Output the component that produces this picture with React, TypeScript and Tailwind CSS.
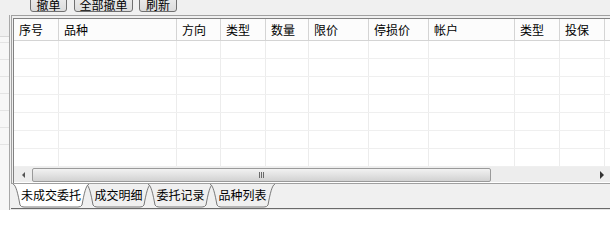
const columns = [
  { title: '序号', w: 45 },
  { title: '品种', w: 118 },
  { title: '方向', w: 44 },
  { title: '类型', w: 45 },
  { title: '数量', w: 43 },
  { title: '限价', w: 60 },
  { title: '停损价', w: 60 },
  { title: '帐户', w: 86 },
  { title: '类型', w: 45 },
  { title: '投保', w: 45 },
  { title: '', w: 60 },
]

const tabs = [
  { label: '未成交委托', w: 76, active: true },
  { label: '成交明细', w: 65, active: false },
  { label: '委托记录', w: 65, active: false },
  { label: '品种列表', w: 65, active: false },
]

const rows = [0, 1, 2, 3, 4, 5, 6]

function ToolButton({ label, w, ml }: { label: string; w: number; ml: number }) {
  return (
    <button
      className="-mt-[10px] h-[22px] shrink-0 rounded-[3px] border border-[#707070] bg-gradient-to-b from-[#f3f3f3] to-[#dcdcdc] pt-[8px] text-[12px] leading-[12px] text-black"
      style={{ width: w, marginLeft: ml }}
    >
      {label}
    </button>
  )
}

function Tab({ label, w, active }: { label: string; w: number; active: boolean }) {
  const d = `M0,0 C3,1 5,10 7,21 Q8,23 11,23 L${w - 11},23 Q${w - 8},23 ${w - 7},21 C${w - 5},10 ${w - 3},1 ${w},0`
  return (
    <div className={`relative -mr-[3px] h-[24px] shrink-0 ${active ? 'z-10' : ''}`} style={{ width: w }}>
      <svg className="absolute inset-0" width={w} height={24} viewBox={`0 0 ${w} 24`}>
        <path d={d} fill={active ? '#ffffff' : '#f0f0f0'} stroke="#7a7a7a" strokeWidth="1" />
      </svg>
      <span className="relative flex h-full items-center justify-center pb-[2px] text-[12px] text-black">
        {label}
      </span>
    </div>
  )
}

export default function App() {
  return (
    <div
      className="flex h-[210px] w-[610px] overflow-hidden bg-[#f0f0f0]"
      style={{ fontFamily: '"Noto Sans CJK SC", "Liberation Sans", sans-serif' }}
    >
      {/* left strip (neighbouring panel) */}
      <div className="flex w-[10px] shrink-0 flex-col">
        <div className="h-[15px]" />
        <div className="flex flex-1 flex-col border-r border-[#a8a8a8] bg-[#f7f7f7]">
          <div className="h-[22px] border-b border-[#d8d8d8] bg-[#f0f0f0]" />
          <div className="h-[6px] border-b border-[#e4e4e4]" />
          {[0, 1, 2, 3, 4, 5].map((i) => (
            <div key={i} className="h-[17px] border-b border-[#e4e4e4]" />
          ))}
        </div>
      </div>

      <div className="ml-[1px] flex min-w-0 flex-1 flex-col">
        {/* toolbar */}
        <div className="flex h-[15px] shrink-0 items-start">
          <ToolButton label="撤单" w={37} ml={19} />
          <ToolButton label="全部撤单" w={59} ml={7} />
          <ToolButton label="刷新" w={38} ml={6} />
        </div>

        {/* grid panel */}
        <div className="flex h-[168px] shrink-0 flex-col border-l border-t border-[#a0a0a0] pl-[1px] pt-[2px]">
          <div className="flex flex-1 flex-col overflow-hidden border-l border-t border-[#828282] bg-white">
            <div className="flex h-[22px] shrink-0 border-b border-[#d4d4d4] bg-[#fcfcfc]">
              {columns.map((c, i) => (
                <div
                  key={i}
                  className="flex shrink-0 items-center border-r border-[#d4d4d4] pl-[5px] text-[12px] text-black"
                  style={{ width: c.w }}
                >
                  {c.title}
                </div>
              ))}
            </div>
            <div className="h-[126px] shrink-0 overflow-hidden">
              {rows.map((r) => (
                <div key={r} className="flex h-[18px] border-b border-[#efefef]">
                  {columns.map((c, i) => (
                    <div key={i} className="shrink-0 border-r border-[#ececec]" style={{ width: c.w }} />
                  ))}
                </div>
              ))}
            </div>

            {/* horizontal scrollbar */}
            <div className="flex h-[15px] shrink-0 items-center bg-[#ededed]">
              <div className="flex w-[18px] shrink-0 items-center justify-center">
                <div className="h-0 w-0 border-y-[3px] border-r-[3px] border-y-transparent border-r-[#555]" />
              </div>
              <div className="flex h-[14px] w-[459px] shrink-0 items-center justify-center rounded-[2px] border border-[#9a9a9a] bg-gradient-to-b from-[#f2f2f2] via-[#e2e2e2] to-[#d2d2d2]">
                <div className="flex gap-[1px]">
                  <div className="h-[6px] w-[1px] bg-[#6a6a6a]" />
                  <div className="h-[6px] w-[1px] bg-[#6a6a6a]" />
                  <div className="h-[6px] w-[1px] bg-[#6a6a6a]" />
                </div>
              </div>
              <div className="flex-1" />
              <div className="mr-[6px] h-0 w-0 border-y-[4px] border-l-[4px] border-y-transparent border-l-[#333]" />
            </div>
          </div>
        </div>

        {/* sheet tabs */}
        <div className="flex h-[26px] shrink-0 items-start border-b border-t border-b-[#6a6a6a] border-t-[#a0a0a0] bg-[#f0f0f0] pl-[2px]">
          {tabs.map((t) => (
            <Tab key={t.label} label={t.label} w={t.w} active={t.active} />
          ))}
        </div>
        <div className="flex-1 bg-[#e6e6e6]" />
      </div>
    </div>
  )
}
